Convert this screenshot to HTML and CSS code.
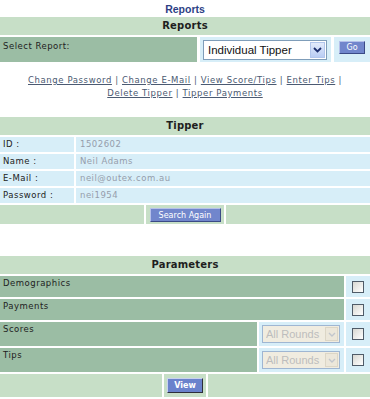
FILE: index.html
```html
<!DOCTYPE html>
<html lang="en">

<head>
    <meta charset="UTF-8">
    <title>Reports</title>
    <link rel="stylesheet" href="styles.css">
</head>

<body>
    <h1 class="page-title">Reports</h1>

    <form class="panel">
        <div class="panel-head">Reports</div>
        <div class="row row-report">
            <div class="cell cell-label">Select Report:</div>
            <div class="cell cell-field">
                <div class="select-wrap report-select">
                    <select name="report">
                        <option>Individual Tipper</option>
                        <option>Round Results</option>
                        <option>Ladder</option>
                    </select>
                    <span class="select-arrow">
                        <svg width="9" height="6" viewBox="0 0 9 6"><path d="M1 1l3.5 3.5L8 1" fill="none" stroke="#1d2f6e" stroke-width="1.8"/></svg>
                    </span>
                </div>
            </div>
            <div class="cell cell-field cell-center">
                <button class="btn btn-go" type="button">Go</button>
            </div>
        </div>
    </form>

    <nav class="links">
        <a href="#">Change Password</a> | <a href="#">Change E-Mail</a> | <a href="#">View Score/Tips</a> | <a href="#">Enter Tips</a> |<br>
        <a href="#">Delete Tipper</a> | <a href="#">Tipper Payments</a>
    </nav>

    <section class="panel tipper">
        <div class="panel-head">Tipper</div>
        <div class="row row-detail">
            <div class="cell cell-field">ID :</div>
            <div class="cell cell-field cell-value">1502602</div>
        </div>
        <div class="row row-detail">
            <div class="cell cell-field">Name :</div>
            <div class="cell cell-field cell-value">Neil Adams</div>
        </div>
        <div class="row row-detail">
            <div class="cell cell-field">E-Mail :</div>
            <div class="cell cell-field cell-value">neil@outex.com.au</div>
        </div>
        <div class="row row-detail">
            <div class="cell cell-field">Password :</div>
            <div class="cell cell-field cell-value">nei1954</div>
        </div>
        <div class="row row-action">
            <div class="cell cell-head"></div>
            <div class="cell cell-head cell-center">
                <button class="btn btn-search" type="button">Search Again</button>
            </div>
            <div class="cell cell-head"></div>
        </div>
    </section>

    <form class="panel params">
        <div class="panel-head">Parameters</div>
        <div class="row row-check">
            <div class="cell cell-label">Demographics</div>
            <div class="cell cell-field cell-center"><input class="check" type="checkbox" name="demographics"></div>
        </div>
        <div class="row row-check">
            <div class="cell cell-label">Payments</div>
            <div class="cell cell-field cell-center"><input class="check" type="checkbox" name="payments"></div>
        </div>
        <div class="row row-select">
            <div class="cell cell-label">Scores</div>
            <div class="cell cell-field">
                <div class="select-wrap rounds-select">
                    <select name="scores-round" disabled>
                        <option>All Rounds</option>
                    </select>
                    <span class="select-arrow">
                        <svg width="8" height="5" viewBox="0 0 8 5"><path d="M1 1l3 3 3-3" fill="none" stroke="#c2c6cc" stroke-width="1.4"/></svg>
                    </span>
                </div>
            </div>
            <div class="cell cell-field cell-center"><input class="check" type="checkbox" name="scores"></div>
        </div>
        <div class="row row-select">
            <div class="cell cell-label">Tips</div>
            <div class="cell cell-field">
                <div class="select-wrap rounds-select">
                    <select name="tips-round" disabled>
                        <option>All Rounds</option>
                    </select>
                    <span class="select-arrow">
                        <svg width="8" height="5" viewBox="0 0 8 5"><path d="M1 1l3 3 3-3" fill="none" stroke="#c2c6cc" stroke-width="1.4"/></svg>
                    </span>
                </div>
            </div>
            <div class="cell cell-field cell-center"><input class="check" type="checkbox" name="tips"></div>
        </div>
        <div class="row row-view">
            <div class="cell cell-head"></div>
            <div class="cell cell-head cell-center">
                <button class="btn btn-view" type="button">View</button>
            </div>
            <div class="cell cell-head"></div>
        </div>
    </form>
</body>

</html>
```

FILE: styles.css
```css
body {
    margin: 0;
    font-family: 'DejaVu Sans', Verdana, sans-serif;
    font-size: 8.5px;
    letter-spacing: 0.5px;
    color: #222;
    background-color: #fff;
}

.page-title {
    margin: 2px 0 1px;
    font: bold 10.5px/14px 'Liberation Sans', Arial, sans-serif;
    letter-spacing: 0;
    color: #2d3f85;
    text-align: center;
}

.panel {
    display: flex;
    flex-direction: column;
    gap: 2px;
    margin: 0;
}

.panel-head {
    height: 18px;
    line-height: 18px;
    background-color: #c7dfc7;
    text-align: center;
    font-weight: bold;
    font-size: 10px;
    letter-spacing: 0.2px;
    color: #1e1e1e;
}

.row {
    display: grid;
    gap: 2px;
}

.cell {
    padding: 0 3px;
}

.cell-label {
    background-color: #9bbda4;
    padding-top: 2px;
}

.cell-field {
    background-color: #d7eef8;
}

.cell-head {
    background-color: #c7dfc7;
}

.cell-center {
    display: flex;
    align-items: center;
    justify-content: center;
    padding: 0;
}

.row-report {
    grid-template-columns: 197px 131px 1fr;
    column-gap: 3px;
    height: 25px;
}

.row-report .cell-label {
    padding-top: 4px;
}

.select-wrap {
    position: relative;
}

.select-wrap select {
    appearance: none;
    display: block;
    width: 100%;
    margin: 0;
    border: 1px solid #7f9db9;
    border-radius: 0;
    font-family: 'Liberation Sans', Arial, sans-serif;
    letter-spacing: 0;
    opacity: 1;
}

.select-arrow {
    position: absolute;
    top: 2px;
    right: 2px;
    bottom: 2px;
    display: flex;
    align-items: center;
    justify-content: center;
    pointer-events: none;
}

.report-select {
    margin: 3px 1px 0 0;
}

.report-select select {
    height: 20px;
    padding: 0 0 0 4px;
    font-size: 11.5px;
    color: #111;
    background-color: #fff;
}

.report-select .select-arrow {
    width: 15px;
    background: linear-gradient(#e3ebfb, #b9cdf4);
    border: 1px solid #b2c6ec;
    box-sizing: border-box;
}

.btn {
    padding: 0;
    font-family: 'DejaVu Sans', Verdana, sans-serif;
    font-size: 8px;
    letter-spacing: 0;
    color: #fff;
    background-color: #7186cc;
    border: 1px solid;
    border-color: #b6c1ea #3b4a86 #3b4a86 #b6c1ea;
    cursor: pointer;
}

.btn-go {
    width: 26px;
    height: 13px;
    margin-bottom: 5px;
}

.links {
    margin: 12px 0 17px;
    text-align: center;
    font-size: 8.5px;
    letter-spacing: 0.6px;
    line-height: 13px;
    color: #4b5a72;
}

.links a {
    color: #4b5a72;
}

.row-detail {
    grid-template-columns: 74px 1fr;
    height: 15px;
    line-height: 15px;
}

.cell-value {
    padding-left: 4px;
    color: #959dab;
}

.row-action {
    grid-template-columns: 144px 78px 1fr;
    height: 19px;
}

.btn-search {
    width: 71px;
    height: 14px;
    margin-top: 1px;
}

.params {
    margin-top: 32px;
}

.row-check {
    grid-template-columns: 1fr 24px;
    height: 21px;
}

.row-select {
    grid-template-columns: 257px 1fr 24px;
    height: 24px;
}

.check {
    appearance: none;
    width: 12px;
    height: 12px;
    margin: 0;
    border: 1px solid #4f5b68;
    background: linear-gradient(135deg, #d8d8d2, #fff);
}

.rounds-select {
    margin: 3px 1px 0 0;
}

.rounds-select select {
    height: 18px;
    padding: 0 0 0 3px;
    font-size: 11px;
    color: #bdbdbd;
    background-color: #f0ece0;
    border-color: #9fb6d2;
}

.rounds-select .select-arrow {
    width: 13px;
    background-color: #ece7da;
    border: 1px solid #dcd6c6;
    box-sizing: border-box;
}

.row-view {
    grid-template-columns: 162px 42px 1fr;
    height: 23px;
}

.btn-view {
    width: 36px;
    height: 15px;
    font-weight: bold;
    background-color: #6a82cc;
    border-color: #c9d1f0 #2e2e3a #2e2e3a #c9d1f0;
}
```
